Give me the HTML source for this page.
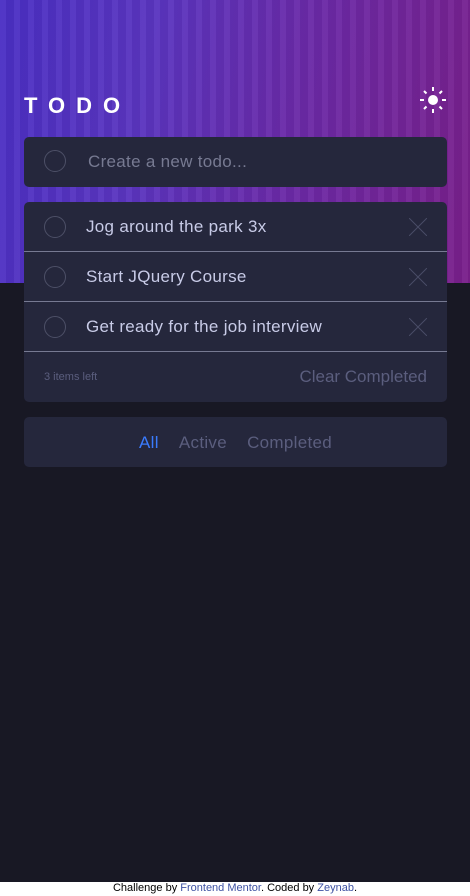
<!DOCTYPE html>
<html><head><meta charset="utf-8"><style>
*{margin:0;padding:0;box-sizing:border-box}
body{width:470px;height:896px;background:#181824;font-family:"Liberation Sans",sans-serif;position:relative;overflow:hidden}
.hero{position:absolute;left:0;top:0;width:470px;height:283px;background:linear-gradient(100deg,#4a2fc4 0%,#5a35c0 30%,#6a2aa8 60%,#7a1f8a 100%)}
.hero:before{content:"";position:absolute;inset:0;background:repeating-linear-gradient(90deg,rgba(255,255,255,0.04) 0 6px,rgba(0,0,0,0.04) 6px 14px)}
h1{position:absolute;left:24px;top:93px;color:#fff;font-size:22px;letter-spacing:11px;font-weight:bold}
.sun{position:absolute;left:420px;top:87px}
.card{position:absolute;left:24px;width:423px;background:#25273c;border-radius:5px}
.circle{position:absolute;left:20px;width:22px;height:22px;border:1px solid #4d5067;border-radius:50%}
.row{position:relative;height:50px;border-bottom:1px solid #777a92}
.row .circle{top:14px}
.row span{position:absolute;left:62px;top:15px;color:#c8cbe7;font-size:17px;letter-spacing:0.3px}
.x{position:absolute;right:20px;top:16px}
.foot{position:relative;height:50px;color:#5b5e7e}
</style></head><body>
<div class="hero"></div>
<h1>TODO</h1>
<svg class="sun" width="26" height="26" viewBox="0 0 26 26"><circle cx="13" cy="13" r="5" fill="#fff"/><g stroke="#fff" stroke-width="2"><line x1="13" y1="0" x2="13" y2="4"/><line x1="13" y1="22" x2="13" y2="26"/><line x1="0" y1="13" x2="4" y2="13"/><line x1="22" y1="13" x2="26" y2="13"/><line x1="4" y1="4" x2="6.5" y2="6.5"/><line x1="19.5" y1="19.5" x2="22" y2="22"/><line x1="22" y1="4" x2="19.5" y2="6.5"/><line x1="4" y1="22" x2="6.5" y2="19.5"/></g></svg>
<div class="card" style="top:137px;height:50px"><div class="circle" style="top:13px"></div><span style="position:absolute;left:64px;top:15px;color:#777a92;font-size:17px;letter-spacing:0.3px">Create a new todo...</span></div>
<div class="card" style="top:202px;height:200px">
<div class="row"><div class="circle"></div><span>Jog around the park 3x</span><svg class="x" width="18" height="18"><path d="M0 0L18 18M18 0L0 18" stroke="#494c66" stroke-width="1"/></svg></div>
<div class="row"><div class="circle"></div><span>Start JQuery Course</span><svg class="x" width="18" height="18"><path d="M0 0L18 18M18 0L0 18" stroke="#494c66" stroke-width="1"/></svg></div>
<div class="row"><div class="circle"></div><span>Get ready for the job interview</span><svg class="x" width="18" height="18"><path d="M0 0L18 18M18 0L0 18" stroke="#494c66" stroke-width="1"/></svg></div>
<div class="foot"><span style="position:absolute;left:20px;top:19px;font-size:11px">3 items left</span><span style="position:absolute;right:20px;top:15px;font-size:17px;color:#5b5e7e">Clear Completed</span></div>
</div>
<div class="card" style="top:417px;height:50px;text-align:center;font-size:17px;line-height:48px;color:#5b5e7e;padding-top:2px;letter-spacing:0.3px"><span style="color:#3a7bfd">All</span>&nbsp;&nbsp;&nbsp;&nbsp;Active&nbsp;&nbsp;&nbsp;&nbsp;Completed</div>
<div style="position:absolute;left:0;top:882px;width:470px;height:14px;background:#fff;text-align:center;font-size:11px;line-height:13px;color:#000">Challenge by <span style="color:#3e52a3">Frontend Mentor</span>. Coded by <span style="color:#3e52a3">Zeynab</span>.</div>
</body></html>
